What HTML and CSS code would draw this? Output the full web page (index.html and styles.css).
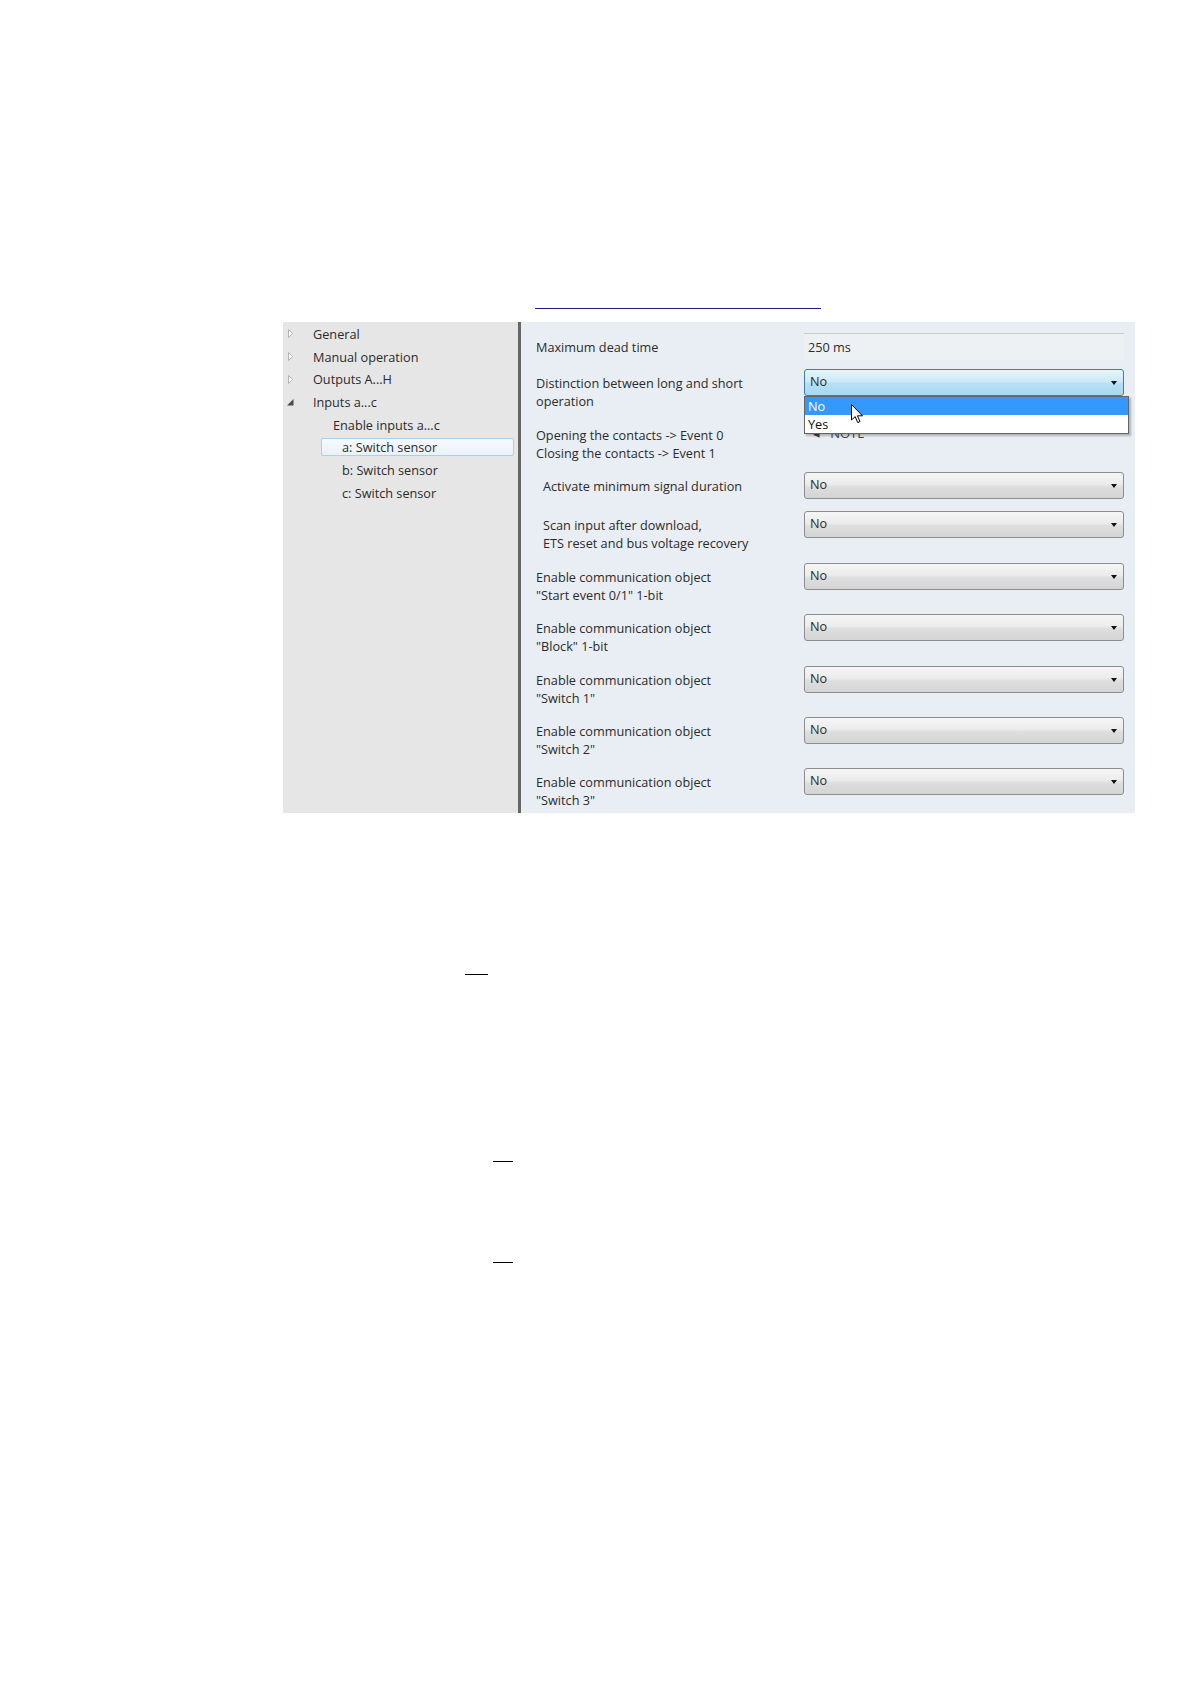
FILE: index.html
```
<!DOCTYPE html>
<html lang="en">
<head>
    <meta charset="UTF-8">
    <title>Inputs a...c - a: Switch sensor</title>
    <link rel="stylesheet" href="styles.css">
</head>
<body>

<div class="link-rule"></div>

<div class="ets">
    <div class="tree">
        <div class="node"><svg class="tw" width="10" height="9" viewBox="0 0 10 9"><polygon points="1.5,0.5 5.5,4.5 1.5,8.5" fill="#fff" stroke="#b4b4b4"/></svg>General</div>
        <div class="node"><svg class="tw" width="10" height="9" viewBox="0 0 10 9"><polygon points="1.5,0.5 5.5,4.5 1.5,8.5" fill="#fff" stroke="#b4b4b4"/></svg>Manual operation</div>
        <div class="node"><svg class="tw" width="10" height="9" viewBox="0 0 10 9"><polygon points="1.5,0.5 5.5,4.5 1.5,8.5" fill="#fff" stroke="#b4b4b4"/></svg>Outputs A...H</div>
        <div class="node"><svg class="tw" width="10" height="9" viewBox="0 0 10 9"><polygon points="6.5,1 6.5,7.5 0,7.5" fill="#4a4a4a"/></svg>Inputs a...c</div>
        <div class="node l1">Enable inputs a...c</div>
        <div class="node l2 sel">a: Switch sensor</div>
        <div class="node l2">b: Switch sensor</div>
        <div class="node l2">c: Switch sensor</div>
    </div>

    <div class="split"></div>

    <div class="params">
        <div class="label">Maximum dead time</div>
        <div class="field">250 ms</div>

        <div class="label">Distinction between long and short<br>operation</div>
        <div class="combo open">No
            <div class="list">
                <div class="item hot">No</div>
                <div class="item">Yes</div>
                <svg class="cursor" width="13" height="20" viewBox="0 0 13 20">
                    <path d="M0.5,0.5 L0.5,16 L4.2,12.6 L6.7,18.6 L9,17.6 L6.5,11.8 L11.5,11.8 Z" fill="#fff" stroke="#000" stroke-width="1" stroke-linejoin="round"/>
                </svg>
            </div>
        </div>

        <div class="label">Opening the contacts -&gt; Event 0<br>Closing the contacts -&gt; Event 1</div>
        <div class="note">&#9666;&nbsp;&nbsp;&nbsp;NOTE</div>

        <div class="label ind">Activate minimum signal duration</div>
        <div class="combo">No</div>

        <div class="label ind">Scan input after download,<br>ETS reset and bus voltage recovery</div>
        <div class="combo">No</div>

        <div class="label">Enable communication object<br>"Start event 0/1" 1-bit</div>
        <div class="combo">No</div>

        <div class="label">Enable communication object<br>"Block" 1-bit</div>
        <div class="combo">No</div>

        <div class="label">Enable communication object<br>"Switch 1"</div>
        <div class="combo">No</div>

        <div class="label">Enable communication object<br>"Switch 2"</div>
        <div class="combo">No</div>

        <div class="label">Enable communication object<br>"Switch 3"</div>
        <div class="combo">No</div>
    </div>
</div>

<div class="mark m1"></div>
<div class="mark m2"></div>
<div class="mark m3"></div>

</body>
</html>
```

FILE: styles.css
```
body {
    margin: 0;
    background: #fff;
    font-family: "Open Sans", "Noto Sans", sans-serif;
    font-size: 12.7px;
    color: #2b2b2b;
}
.link-rule {
    margin: 308px 0 0 535px;
    width: 286px;
    height: 1px;
    background: #1c1c7c;
}
.ets {
    display: flex;
    margin: 13px 0 0 283px;
    width: 852px;
    height: 491px;
}
.tree {
    width: 235px;
    background: #e6e6e6;
    padding-top: 0.6px;
}
.node {
    display: flex;
    align-items: center;
    height: 22.7px;
    padding-left: 4px;
    white-space: nowrap;
}
.tw {
    margin-right: 16px;
}
.node.l1 {
    padding-left: 50px;
}
.node.l2 {
    padding-left: 59px;
}
.node.sel {
    box-sizing: border-box;
    height: 18px;
    margin: 2.35px 0 2.35px 38px;
    width: 193px;
    padding-left: 20px;
    border: 1px solid #a9d0ee;
    border-radius: 2px;
    background: linear-gradient(#f7fafd, #e9f1f9);
}
.split {
    width: 3px;
    background: #666;
}
.params {
    flex: 1;
    background: #e9eef4;
    padding: 11px 0 0 15px;
    display: grid;
    grid-template-columns: 268px 320px;
    grid-template-rows: 36px 52px 51px 39px 52px 51px 52px 51px 51px auto;
    align-items: start;
}
.label {
    padding-top: 4.5px;
    line-height: 18px;
    white-space: nowrap;
}
.label.ind {
    padding-left: 7px;
}
.field {
    box-sizing: border-box;
    height: 27px;
    border-top: 1px solid #c9cdd2;
    background: #eef1f4;
    padding-left: 4px;
    line-height: 26px;
}
.combo {
    position: relative;
    box-sizing: border-box;
    height: 27px;
    border: 1px solid #8d8d8d;
    border-radius: 3px;
    background: linear-gradient(#f5f5f5, #ececec 45%, #dedede 55%, #d4d4d4);
    padding-left: 5px;
    line-height: 22px;
}
.combo::after {
    content: "";
    position: absolute;
    right: 6px;
    top: 11px;
    border-left: 3.5px solid transparent;
    border-right: 3.5px solid transparent;
    border-top: 4px solid #111;
}
.combo.open {
    border-color: #3c7fb1;
    background: linear-gradient(#e6f5fc, #cdeaf8 45%, #b5e0f5 55%, #a8d8f1);
}
.list {
    position: absolute;
    left: -1px;
    top: 26px;
    width: 325px;
    box-sizing: border-box;
    border: 1px solid #646464;
    background: #fff;
    box-shadow: 2px 2px 2px rgba(0, 0, 0, 0.25);
    z-index: 2;
}
.item {
    height: 18px;
    line-height: 18px;
    padding-left: 3px;
    color: #111;
}
.item.hot {
    background: #3399ff;
    color: #fff;
}
.cursor {
    position: absolute;
    left: 46px;
    top: 7px;
}
.note {
    padding: 3px 0 0 9px;
    line-height: 18px;
    font-size: 13px;
    color: #444;
}
.mark {
    height: 1px;
    background: #000;
}
.m1 {
    margin: 161px 0 0 465px;
    width: 23px;
}
.m2 {
    margin: 186px 0 0 493px;
    width: 20px;
}
.m3 {
    margin: 100px 0 0 493px;
    width: 20px;
}
```
